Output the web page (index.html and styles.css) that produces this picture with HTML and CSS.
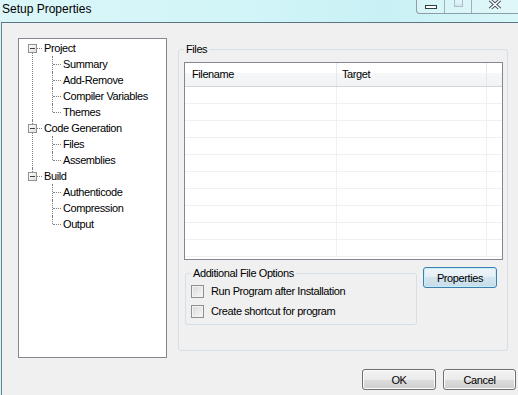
FILE: index.html
```html
<!DOCTYPE html>
<html lang="en">
<head>
  <meta charset="UTF-8" />
  <title>Setup Properties</title>
  <link rel="stylesheet" href="styles.css">
</head>
<body>
  <div class="window">
    <div class="titlebar">
      <span class="title">Setup Properties</span>
      <div class="caption">
        <span class="cap-btn cap-min"><i class="min-icon"></i></span>
        <span class="cap-btn cap-max"><i class="max-icon"></i></span>
        <span class="cap-btn cap-close">
          <svg width="14" height="9" viewBox="0 -4 14 9">
            <path d="M2 -4 L12 5 M12 -4 L2 5" stroke="#3a4a55" stroke-width="3.4" fill="none"/>
            <path d="M2 -4 L12 5 M12 -4 L2 5" stroke="#ffffff" stroke-width="1.6" fill="none"/>
          </svg>
        </span>
      </div>
    </div>

    <div class="body">
      <div class="main">
        <ul class="tree">
          <li class="root"><div class="row"><span class="toggle"></span>Project</div>
            <ul class="children">
              <li><div class="row">Summary</div></li>
              <li><div class="row">Add-Remove</div></li>
              <li><div class="row">Compiler Variables</div></li>
              <li><div class="row">Themes</div></li>
            </ul>
          </li>
          <li class="root"><div class="row"><span class="toggle"></span>Code Generation</div>
            <ul class="children">
              <li><div class="row">Files</div></li>
              <li><div class="row">Assemblies</div></li>
            </ul>
          </li>
          <li class="root"><div class="row"><span class="toggle"></span>Build</div>
            <ul class="children">
              <li><div class="row">Authenticode</div></li>
              <li><div class="row">Compression</div></li>
              <li><div class="row">Output</div></li>
            </ul>
          </li>
        </ul>

        <div class="panel">
          <fieldset class="group files-group">
            <legend>Files</legend>
            <div class="listview">
              <div class="lv-header">
                <span class="col c1">Filename</span>
                <span class="col c2">Target</span>
                <span class="col c3"></span>
              </div>
              <div class="lv-row"><span class="cell c1"></span><span class="cell c2"></span><span class="cell c3"></span></div>
              <div class="lv-row"><span class="cell c1"></span><span class="cell c2"></span><span class="cell c3"></span></div>
              <div class="lv-row"><span class="cell c1"></span><span class="cell c2"></span><span class="cell c3"></span></div>
              <div class="lv-row"><span class="cell c1"></span><span class="cell c2"></span><span class="cell c3"></span></div>
              <div class="lv-row"><span class="cell c1"></span><span class="cell c2"></span><span class="cell c3"></span></div>
              <div class="lv-row"><span class="cell c1"></span><span class="cell c2"></span><span class="cell c3"></span></div>
              <div class="lv-row"><span class="cell c1"></span><span class="cell c2"></span><span class="cell c3"></span></div>
              <div class="lv-row"><span class="cell c1"></span><span class="cell c2"></span><span class="cell c3"></span></div>
              <div class="lv-row"><span class="cell c1"></span><span class="cell c2"></span><span class="cell c3"></span></div>
              <div class="lv-row"><span class="cell c1"></span><span class="cell c2"></span><span class="cell c3"></span></div>
            </div>

            <div class="options-row">
              <fieldset class="group options-group">
                <legend>Additional File Options</legend>
                <label class="check"><span class="box"></span>Run Program after Installation</label>
                <label class="check"><span class="box"></span>Create shortcut for program</label>
              </fieldset>
              <button class="btn btn-default">Properties</button>
            </div>
          </fieldset>
        </div>
      </div>

      <div class="footer">
        <button class="btn">OK</button>
        <button class="btn btn-cancel">Cancel</button>
      </div>
    </div>
  </div>
</body>
</html>
```

FILE: styles.css
```css
body {
  margin: 0;
  font-family: "Liberation Sans", Arial, sans-serif;
  font-size: 11px;
  color: #000;
}
.window {
  width: 518px;
  height: 395px;
  overflow: hidden;
  background: #d4f4f7;
}

/* title bar */
.titlebar {
  height: 22px;
  display: flex;
  justify-content: space-between;
  background: linear-gradient(90deg, #dbf6f8 0%, #d2f5f8 45%, #c9f1f5 75%, #d9f6f8 100%);
}
.title {
  padding: 2px 0 0 2px;
  line-height: 14px;
  font-size: 12px;
}
.caption {
  display: flex;
  align-self: flex-start;
  height: 13px;
  border-left: 1px solid #8d9ea8;
  border-bottom: 1px solid #8d9ea8;
  border-bottom-left-radius: 4px;
  background: rgba(255, 255, 255, 0.2);
}
.cap-btn {
  display: flex;
  justify-content: center;
  height: 13px;
  border-right: 1px solid #9fb0b9;
}
.cap-min { width: 27px; align-items: center; }
.cap-max { width: 26px; }
.cap-close { width: 46px; border-right: none; }
.min-icon {
  width: 12px;
  height: 4px;
  box-sizing: border-box;
  border: 1px solid #2f3e48;
  background: #fff;
}
.max-icon {
  width: 9px;
  height: 7px;
  box-sizing: border-box;
  border: 1px solid #a9bdc6;
  border-top: none;
  box-shadow: inset 0 -2px 0 #d6e6ec;
}
.cap-close svg {
  display: block;
  margin-left: 0;
}

/* window body */
.body {
  height: 372px;
  margin-left: 1px;
  border-left: 1px solid #6e838d;
  border-top: 1px solid #5c7582;
  background: #f0f0f0;
  padding: 15px 2px 0 16px;
}
.main {
  display: flex;
  align-items: flex-start;
}

/* tree view */
.tree {
  list-style: none;
  margin: 0;
  padding: 1px 0 0;
  width: 149px;
  height: 320px;
  box-sizing: border-box;
  border: 1px solid #828790;
  background: #fff;
  letter-spacing: -0.4px;
}
.tree ul {
  list-style: none;
  margin: 0;
  padding: 0;
}
.tree li {
  position: relative;
}
.row {
  position: relative;
  height: 16px;
  line-height: 16px;
  white-space: nowrap;
}
.root > .row {
  padding-left: 25px;
}
.children > li > .row {
  padding-left: 44px;
}
.root::before,
.children > li::before {
  content: "";
  position: absolute;
  top: 0;
  bottom: 0;
  border-left: 1px dotted #808080;
}
.root::before { left: 13px; }
.children > li::before { left: 33px; }
.root:first-child::before { top: 8px; }
.root:last-child::before,
.children > li:last-child::before {
  bottom: auto;
  height: 8px;
}
.root:first-child:last-child::before { height: 0; }
.root > .row::after,
.children > li > .row::after {
  content: "";
  position: absolute;
  top: 8px;
  border-top: 1px dotted #808080;
}
.root > .row::after { left: 14px; width: 9px; }
.children > li > .row::after { left: 34px; width: 8px; }
.toggle {
  position: absolute;
  left: 9px;
  top: 4px;
  width: 9px;
  height: 9px;
  box-sizing: border-box;
  border: 1px solid #919191;
  background: linear-gradient(135deg, #ffffff, #dedede);
  z-index: 1;
}
.toggle::before {
  content: "";
  position: absolute;
  left: 1px;
  top: 3px;
  width: 5px;
  height: 1px;
  background: #404040;
}

/* right panel */
.panel {
  margin: 5px 0 0 11px;
}
.group {
  margin: 0;
  border: 1px solid #d5dfe5;
  border-radius: 3px;
  min-width: 0;
}
.group legend {
  padding: 0 2px;
  line-height: 13px;
  letter-spacing: -0.4px;
}
.files-group {
  width: 330px;
  height: 308px;
  box-sizing: border-box;
  padding: 6px 4px 0 5px;
}

/* list view */
.listview {
  height: 198px;
  box-sizing: border-box;
  border: 1px solid #828790;
  background: #fff;
  overflow: hidden;
}
.lv-header,
.lv-row {
  display: flex;
}
.lv-header {
  height: 24px;
  box-sizing: border-box;
  border-bottom: 1px solid #d5d5d5;
  background: linear-gradient(#ffffff 0%, #ffffff 45%, #f6f7f8 45%, #f1f2f3 100%);
  line-height: 23px;
  letter-spacing: -0.4px;
}
.lv-row {
  height: 17px;
  box-sizing: border-box;
  border-bottom: 1px solid #f0f0f0;
}
.c1 { width: 152px; }
.c2 { width: 150px; }
.c3 { flex: 1; }
.col {
  box-sizing: border-box;
  padding-left: 7px;
  border-right: 1px solid #e3e8ee;
}
.col.c2 { padding-left: 5px; }
.col.c3 { border-right: none; }
.cell {
  box-sizing: border-box;
  border-right: 1px solid #f0f0f0;
}
.cell.c3 { border-right: none; }

/* options */
.options-row {
  display: flex;
  align-items: flex-start;
  margin-top: 7px;
}
.options-group {
  width: 232px;
  box-sizing: border-box;
  margin-left: 1px;
  padding: 1px 5px 3px;
}
.check {
  display: flex;
  align-items: center;
  height: 20px;
  letter-spacing: -0.4px;
}
.box {
  width: 13px;
  height: 13px;
  box-sizing: border-box;
  margin-right: 7px;
  border: 1px solid #8e8f8f;
  background: linear-gradient(135deg, #d8d8d8, #f8f8f8);
  box-shadow: inset 0 0 0 1px #f3f3f3;
}

/* buttons */
.btn {
  width: 74px;
  height: 21px;
  padding: 0;
  font-family: "Liberation Sans", Arial, sans-serif;
  font-size: 11px;
  letter-spacing: -0.4px;
  color: #000;
  border: 1px solid #707070;
  border-radius: 3px;
  background: linear-gradient(#f2f2f2 0%, #ebebeb 50%, #dddddd 50%, #cfcfcf 100%);
  box-shadow: inset 0 0 0 1px #fcfcfc;
}
.btn-default {
  margin-left: 6px;
  border-color: #3c7fb1;
  background: linear-gradient(#eef5f9 0%, #e4eef4 50%, #d3e5ef 50%, #c7dde9 100%);
  box-shadow: inset 0 0 0 1px #c9ecf9;
}
.footer {
  display: flex;
  justify-content: flex-end;
  gap: 7px;
  margin-top: 11px;
}
.btn-cancel {
  width: 73px;
}
```
